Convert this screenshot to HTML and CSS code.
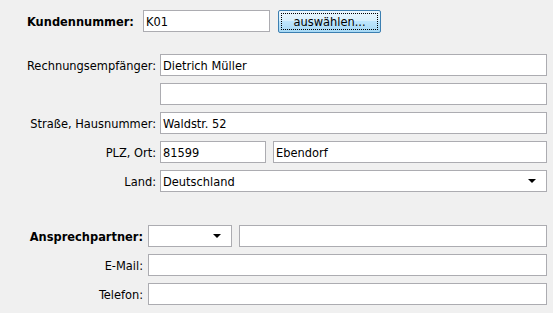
FILE: index.html
```html
<!DOCTYPE html>
<html lang="de">
<head>
<meta charset="utf-8">
<title>Kunde</title>
<link rel="stylesheet" href="styles.css">
</head>
<body>
<div class="form">
  <div class="top-row">
    <label class="bold top-label">Kundennummer:</label>
    <div class="field kd">K01</div>
    <button class="btn"><span class="focus">auswählen...</span></button>
  </div>

  <div class="group g1">
    <label class="lbl">Rechnungsempfänger:</label>
    <div class="field">Dietrich Müller</div>

    <span class="lbl"></span>
    <div class="field"></div>

    <label class="lbl">Straße, Hausnummer:</label>
    <div class="field">Waldstr. 52</div>

    <label class="lbl">PLZ, Ort:</label>
    <div class="pair">
      <div class="field plz">81599</div>
      <div class="field ort">Ebendorf</div>
    </div>

    <label class="lbl">Land:</label>
    <div class="field combo">Deutschland<span class="arrow"></span></div>
  </div>

  <div class="group g2">
    <label class="lbl bold">Ansprechpartner:</label>
    <div class="pair">
      <div class="field combo anrede"><span class="arrow"></span></div>
      <div class="field ort"></div>
    </div>

    <label class="lbl">E-Mail:</label>
    <div class="field"></div>

    <label class="lbl">Telefon:</label>
    <div class="field"></div>
  </div>
</div>
</body>
</html>
```

FILE: styles.css
```css
html, body {
  margin: 0;
  padding: 0;
  background: #f0f0f0;
}
body {
  font-family: "DejaVu Sans Condensed", "DejaVu Sans", sans-serif;
  font-size: 12.7px;
  color: #000;
}
.form {
  padding: 10px 6px 0 27px;
}
.bold {
  font-weight: bold;
}
.top-row {
  display: flex;
  align-items: center;
  height: 22px;
}
.top-label {
  width: 116px;
}
.field {
  box-sizing: border-box;
  height: 22px;
  border: 1px solid #acacb1;
  background: #fff;
  padding: 0 2px;
  display: flex;
  align-items: center;
  white-space: nowrap;
  position: relative;
}
.kd {
  width: 127px;
}
.btn {
  box-sizing: border-box;
  margin-left: 8px;
  width: 103px;
  height: 23px;
  padding: 2px;
  border: 1px solid #3c7fb1;
  border-radius: 2px;
  background: linear-gradient(#eaf6fd 0%, #d9f0fc 45%, #bee6fd 50%, #a7d9f5 100%);
  font: inherit;
  color: #000;
  display: flex;
}
.focus {
  flex: 1;
  border: 1px dotted #000;
  display: flex;
  align-items: center;
  justify-content: center;
}
.group {
  display: grid;
  row-gap: 7px;
  column-gap: 4px;
  grid-auto-rows: 22px;
  align-items: center;
}
.g1 {
  margin-top: 22px;
  grid-template-columns: 129px 1fr;
}
.g2 {
  margin-top: 33px;
  grid-template-columns: 116px 1fr;
  column-gap: 5px;
}
.lbl {
  text-align: right;
  white-space: nowrap;
}
.pair {
  display: flex;
  gap: 7px;
}
.plz {
  width: 106px;
}
.ort {
  flex: 1;
}
.anrede {
  width: 84px;
}
.arrow {
  position: absolute;
  right: 10px;
  top: 8px;
  width: 0;
  height: 0;
  border-left: 4px solid transparent;
  border-right: 4px solid transparent;
  border-top: 4px solid #000;
}
```
